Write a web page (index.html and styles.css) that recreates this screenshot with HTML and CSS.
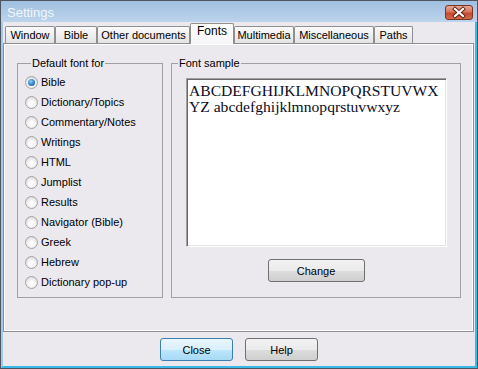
FILE: index.html
```html
<!DOCTYPE html>
<html lang="en">
<head>
    <meta charset="UTF-8">
    <meta name="viewport" content="width=device-width, initial-scale=1.0">
    <title>Settings</title>
    <link rel="stylesheet" href="styles.css">
</head>
<body>
    <div class="window">
        <div class="titlebar">
            <span class="title">Settings</span>
            <button class="close-x" aria-label="Close">
                <svg width="26" height="13" viewBox="0 0 26 13">
                    <path d="M9 3 L17 10 M17 3 L9 10" stroke="#5e1a0e" stroke-width="4" stroke-linecap="square"/>
                    <path d="M9 3 L17 10 M17 3 L9 10" stroke="#ffffff" stroke-width="2.2" stroke-linecap="square"/>
                </svg>
            </button>
        </div>

        <div class="client">
            <ul class="tabs">
                <li class="tab" style="width: 50px">Window</li>
                <li class="tab" style="width: 42px">Bible</li>
                <li class="tab" style="width: 93px">Other documents</li>
                <li class="tab active" style="width: 44px">Fonts</li>
                <li class="tab" style="width: 60px">Multimedia</li>
                <li class="tab" style="width: 80px">Miscellaneous</li>
                <li class="tab" style="width: 39px">Paths</li>
            </ul>

            <section class="panel">
                <fieldset class="group group-list">
                    <legend>Default font for</legend>
                    <label class="radio-row"><span class="radio checked"></span>Bible</label>
                    <label class="radio-row"><span class="radio"></span>Dictionary/Topics</label>
                    <label class="radio-row"><span class="radio"></span>Commentary/Notes</label>
                    <label class="radio-row"><span class="radio"></span>Writings</label>
                    <label class="radio-row"><span class="radio"></span>HTML</label>
                    <label class="radio-row"><span class="radio"></span>Jumplist</label>
                    <label class="radio-row"><span class="radio"></span>Results</label>
                    <label class="radio-row"><span class="radio"></span>Navigator (Bible)</label>
                    <label class="radio-row"><span class="radio"></span>Greek</label>
                    <label class="radio-row"><span class="radio"></span>Hebrew</label>
                    <label class="radio-row"><span class="radio"></span>Dictionary pop-up</label>
                </fieldset>

                <fieldset class="group group-sample">
                    <legend>Font sample</legend>
                    <div class="sample">ABCDEFGHIJKLMNOPQRSTUVWX<br>YZ abcdefghijklmnopqrstuvwxyz</div>
                    <button class="btn btn-change">Change</button>
                </fieldset>
            </section>

            <div class="footer">
                <button class="btn btn-default">Close</button>
                <button class="btn">Help</button>
            </div>
        </div>
    </div>
</body>
</html>
```

FILE: styles.css
```css
body {
    margin: 0;
    font-family: "Liberation Sans", Arial, sans-serif;
    font-size: 11px;
    color: #000;
    background: #fff;
}

.window {
    width: 478px;
    height: 369px;
    box-sizing: border-box;
    border: 1px solid #4d5560;
    background: #b7d0ea;
    display: flex;
    flex-direction: column;
}

.titlebar {
    height: 21px;
    flex-shrink: 0;
    display: flex;
    align-items: flex-start;
    justify-content: space-between;
    padding: 0 4px 0 6px;
    background: linear-gradient(#a0bfe0, #bcd4ec);
}

.title {
    font-size: 13px;
    line-height: 14px;
    padding-top: 5px;
    color: #f2f6fb;
}

.close-x {
    width: 28px;
    height: 15px;
    margin-top: 4px;
    padding: 0;
    border: 1px solid #7b3526;
    border-radius: 3px;
    background: linear-gradient(#e6a595, #d77560 45%, #c64a30 55%, #d06a4c);
    display: flex;
    align-items: center;
    justify-content: center;
}

.client {
    flex: 1;
    display: flex;
    flex-direction: column;
    background: #ebe9ed;
    border-left: 2px solid #a8c8e8;
    border-right: 2px solid #3ab8e8;
    border-bottom: 2px solid #3ab8e8;
}

.tabs {
    list-style: none;
    margin: 0 0 -1px;
    padding: 1px 0 0 2px;
    height: 22px;
    box-sizing: border-box;
    display: flex;
    align-items: flex-end;
    position: relative;
    z-index: 1;
}

.tab {
    height: 17px;
    box-sizing: border-box;
    margin-bottom: 1px;
    border: 1px solid #8f8f8f;
    border-bottom: none;
    border-radius: 2px 2px 0 0;
    background: linear-gradient(#fbfbfb, #e3e3e3);
    text-align: center;
    line-height: 16px;
    white-space: nowrap;
}

.tab.active {
    height: 21px;
    margin-bottom: 0;
    background: linear-gradient(#ffffff, #f6f6f8);
    line-height: 15px;
    font-size: 12px;
}

.panel {
    height: 289px;
    box-sizing: border-box;
    margin-right: 1px;
    padding: 13px 12px 0 13px;
    border: 1px solid #8c8f96;
    box-shadow: inset 1px 1px 0 #ffffff, inset -1px -1px 0 #ffffff;
    display: flex;
    align-items: flex-start;
    gap: 8px;
}

.group {
    margin: 0;
    padding: 0;
    height: 241px;
    box-sizing: border-box;
    border: 1px solid #a0a0a0;
    min-width: 0;
}

.group legend {
    margin-left: 6px;
    padding: 0 1px;
    line-height: 13px;
}

.group-list {
    width: 146px;
    padding: 2px 0 0 7px;
}

.group-sample {
    flex: 1;
}

.radio-row {
    display: flex;
    align-items: center;
    height: 20px;
    white-space: nowrap;
}

.radio {
    width: 13px;
    height: 13px;
    box-sizing: border-box;
    margin-right: 3px;
    border: 1px solid #a3a3a3;
    border-radius: 50%;
    background: radial-gradient(circle at 50% 60%, #fbfbfb 30%, #d6d6d6 90%);
    display: flex;
    align-items: center;
    justify-content: center;
}

.radio.checked::after {
    content: "";
    width: 7px;
    height: 7px;
    border-radius: 50%;
    background: radial-gradient(circle at 40% 35%, #8fd2f6, #2a78bc 60%, #174f86);
}

.sample {
    height: 169px;
    box-sizing: border-box;
    margin: 8px 13px 0 14px;
    padding: 4px 2px;
    background: #fff;
    border: 1px solid;
    border-color: #a0a0a0 #ffffff #ffffff #a0a0a0;
    box-shadow: inset 1px 1px 0 #696969, inset -1px -1px 0 #e3e3e3;
    font-family: "Liberation Serif", "Times New Roman", serif;
    font-size: 15.6px;
    line-height: 16px;
    color: #0c0c24;
    white-space: nowrap;
    overflow: hidden;
}

.btn {
    width: 73px;
    height: 23px;
    padding: 0;
    font-family: inherit;
    font-size: 11px;
    color: #000;
    border: 1px solid #707070;
    border-radius: 3px;
    background: linear-gradient(#f2f2f2, #ebebeb 50%, #dddddd 51%, #cfcfcf);
}

.btn-change {
    display: block;
    width: 97px;
    margin: 12px auto 0;
}

.btn-default {
    border-color: #3c7fb1;
    background: linear-gradient(#eaf6fd, #d9f0fc 50%, #bee6fd 51%, #a7d9f5);
}

.footer {
    display: flex;
    justify-content: center;
    gap: 12px;
    padding-top: 6px;
}
```
